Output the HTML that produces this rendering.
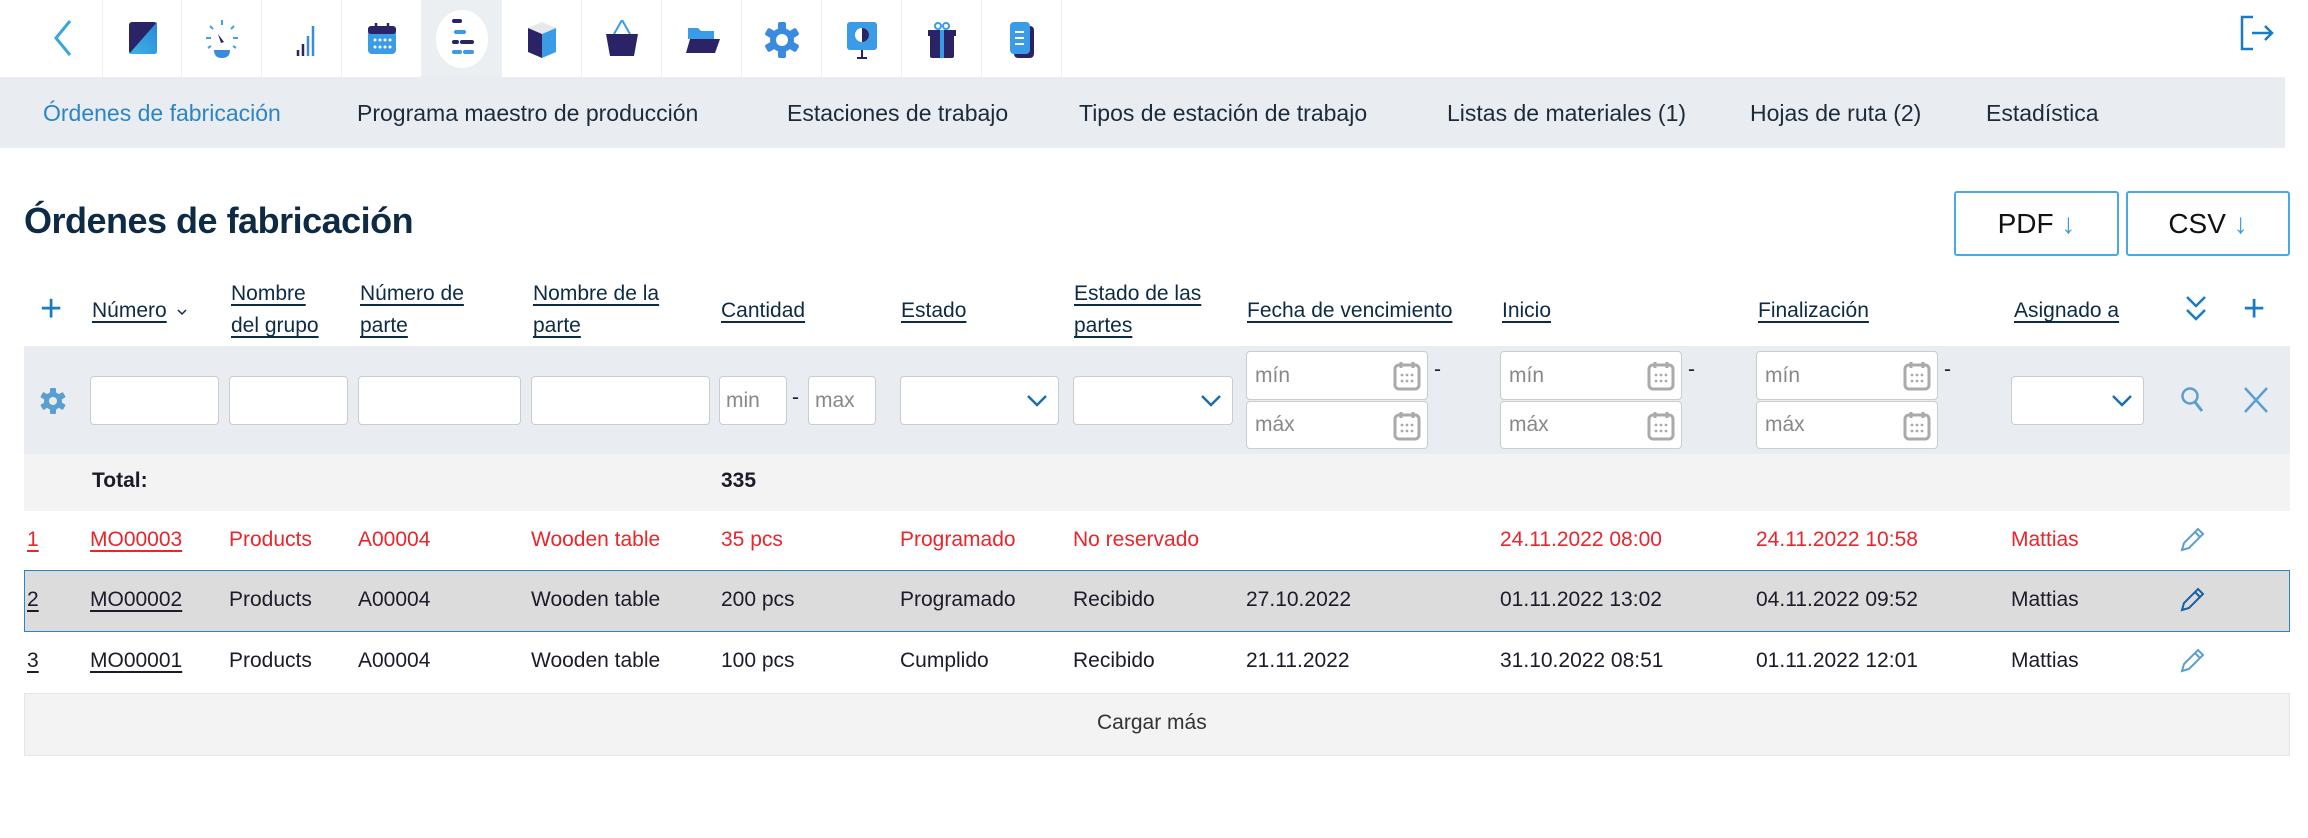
<!DOCTYPE html>
<html><head><meta charset="utf-8"><style>
*{box-sizing:border-box;margin:0;padding:0}
body{width:2308px;height:838px;background:#fff;position:relative;overflow:hidden;font-family:"Liberation Sans",sans-serif;color:#1b1b2a}
.a{position:absolute;white-space:nowrap}
.cell{position:absolute;top:0;width:80px;height:77px;border-right:1px solid #eef0f2}
.cell svg{position:absolute;left:22px;top:20px}
.sub{top:100px;font-size:23px;color:#1c2a3a}
.h{font-size:21px;color:#0d2b45;text-decoration:underline;text-underline-offset:4px;line-height:32px}
.in{position:absolute;background:#fff;border:1px solid #c9ccd0;border-radius:4px}
.ph{font-size:21px;color:#888;position:absolute;left:8px;top:50%;transform:translateY(-50%)}
.r{font-size:21px}
.red{color:#e8262b}
.u{text-decoration:underline;text-underline-offset:4px}
</style></head><body>
<svg class="a" style="left:50px;top:18px" width="24" height="40" viewBox="0 0 24 40"><path d="M20 3 L6 20 L20 37" fill="none" stroke="#3aa6e0" stroke-width="3"/></svg>
<div class="cell" style="left:102px;border-left:1px solid #eef0f2"><svg width="36" height="36" viewBox="0 0 36 36"><defs><linearGradient id="g" x1="0" y1="1" x2="1" y2="0"><stop offset="0" stop-color="#3ab5e6"/><stop offset="1" stop-color="#2e86d9"/></linearGradient></defs><rect x="4" y="2" width="28" height="32" rx="3" fill="#2a2466"/><path d="M32 2 L32 31 Q32 34 29 34 L4 34 Z" fill="url(#g)"/></svg></div>
<div class="cell" style="left:182px"><svg width="36" height="40" viewBox="0 0 36 40"><g stroke="#3aa6e0" stroke-width="2"><path d="M18 0v5M6 6l3 3M30 6l-3 3M2 18h5M29 18h5M4 28l3-2M32 28l-3-2"/></g><path d="M10 30h16q0 8-8 8t-8-8z" fill="#3a8be0"/><path d="M14 14l6 8-3 1z" fill="#2a2466"/></svg></div>
<div class="cell" style="left:262px"><svg width="36" height="40" viewBox="0 0 36 40"><g stroke-width="2.5"><path d="M14 36v-6" stroke="#2a2466"/><path d="M19 36v-12" stroke="#2a2466"/><path d="M24 36v-20" stroke="#3a8be0"/><path d="M29 36v-30" stroke="#3a8be0"/></g></svg></div>
<div class="cell" style="left:342px"><svg width="36" height="40" viewBox="0 0 36 40"><rect x="4" y="6" width="28" height="28" rx="4" fill="#3a9be6"/><rect x="4" y="6" width="28" height="8" rx="3" fill="#2a2466"/><path d="M12 3v7M24 3v7" stroke="#2a2466" stroke-width="2.5"/><g fill="#fff"><circle cx="11" cy="20" r="1.5"/><circle cx="16" cy="20" r="1.5"/><circle cx="21" cy="20" r="1.5"/><circle cx="26" cy="20" r="1.5"/><circle cx="11" cy="27" r="1.5"/><circle cx="16" cy="27" r="1.5"/><circle cx="21" cy="27" r="1.5"/><circle cx="26" cy="27" r="1.5"/></g></svg></div>
<div class="cell" style="left:422px;background:#eceff2"><div style="position:absolute;left:14px;top:10px;width:52px;height:58px;border-radius:50%;background:#fff"></div><svg width="36" height="40" viewBox="0 0 36 40" style="top:18px"><g stroke-width="4" stroke-linecap="round"><path d="M10 3h6" stroke="#2a2466"/><path d="M12 14h8" stroke="#3a9be6"/><path d="M10 24h3M18 24h10" stroke="#2a2466"/><path d="M10 34h6M21 34h7" stroke="#3a9be6"/></g></svg></div>
<div class="cell" style="left:502px"><svg width="36" height="40" viewBox="0 0 36 40"><path d="M4 8L18 2L32 8L18 14Z" fill="#e6e8ec"/><path d="M4 8L18 14V38L4 32Z" fill="#2a2466"/><path d="M32 8L18 14V38L32 32Z" fill="#3a9be6"/></svg></div>
<div class="cell" style="left:582px"><svg width="36" height="40" viewBox="0 0 36 40"><path d="M10 14L18 0L26 14" fill="none" stroke="#3a9be6" stroke-width="2"/><path d="M2 14h32l-4 22h-24z" fill="#2a2466"/></svg></div>
<div class="cell" style="left:662px"><svg width="36" height="40" viewBox="0 0 36 40"><path d="M4 8h10l3 3h13v8H4z" fill="#3a9be6"/><path d="M6 19h30l-5 14H2z" fill="#2a2466"/></svg></div>
<div class="cell" style="left:742px"><svg width="36" height="40" viewBox="0 0 36 40"><g fill="#3a8be0"><circle cx="18" cy="20" r="12"/><rect x="14" y="2" width="8" height="36" rx="2"/><rect x="14" y="2" width="8" height="36" rx="2" transform="rotate(60 18 20)"/><rect x="14" y="2" width="8" height="36" rx="2" transform="rotate(-60 18 20)"/></g><circle cx="18" cy="20" r="6" fill="#fff"/></svg></div>
<div class="cell" style="left:822px"><svg width="36" height="40" viewBox="0 0 36 40"><rect x="3" y="2" width="30" height="28" rx="3" fill="#3a9be6"/><circle cx="18" cy="15" r="7" fill="#fff"/><path d="M18 8a7 7 0 0 1 0 14z" fill="#2a2466"/><path d="M18 30v8M13 38h10" stroke="#2a2466" stroke-width="2"/></svg></div>
<div class="cell" style="left:902px"><svg width="36" height="40" viewBox="0 0 36 40"><rect x="6" y="12" width="24" height="26" rx="2" fill="#2a2466"/><rect x="4" y="10" width="28" height="6" fill="#2a2466"/><rect x="16" y="10" width="4" height="28" fill="#3a9be6"/><circle cx="14" cy="6" r="3" fill="none" stroke="#3a9be6" stroke-width="2"/><circle cx="22" cy="6" r="3" fill="none" stroke="#3a9be6" stroke-width="2"/></svg></div>
<div class="cell" style="left:982px"><svg width="36" height="40" viewBox="0 0 36 40"><rect x="10" y="6" width="20" height="32" rx="4" fill="#2a2466"/><rect x="6" y="2" width="20" height="32" rx="4" fill="#3a9be6"/><path d="M11 12h9M11 18h9M11 24h9" stroke="#fff" stroke-width="2"/></svg></div>
<svg class="a" style="left:2240px;top:15px" width="36" height="36" viewBox="0 0 36 36"><path d="M13 2H2V34H13" fill="none" stroke="#1a7bc4" stroke-width="2.5"/><path d="M12 18H32M25 11L32 18L25 25" fill="none" stroke="#1a7bc4" stroke-width="2.5"/></svg>

<div class="a" style="left:0;top:77px;width:2285px;height:71px;background:#e9edf1"></div>
<div class="a sub" style="left:43px;color:#2a85c7">Órdenes de fabricación</div>
<div class="a sub" style="left:357px">Programa maestro de producción</div>
<div class="a sub" style="left:787px">Estaciones de trabajo</div>
<div class="a sub" style="left:1079px">Tipos de estación de trabajo</div>
<div class="a sub" style="left:1447px">Listas de materiales (1)</div>
<div class="a sub" style="left:1750px">Hojas de ruta (2)</div>
<div class="a sub" style="left:1986px">Estadística</div>

<div class="a" style="left:24px;top:200px;font-size:36px;font-weight:bold;color:#0d2b45;letter-spacing:-0.5px">Órdenes de fabricación</div>
<div class="a" style="left:1954px;top:191px;width:165px;height:65px;border:2px solid #4aa8e6;border-radius:3px;font-size:28px;color:#111;text-align:center;line-height:61px">PDF <span style="color:#3a9be6">↓</span></div>
<div class="a" style="left:2126px;top:191px;width:164px;height:65px;border:2px solid #4aa8e6;border-radius:3px;font-size:28px;color:#111;text-align:center;line-height:61px">CSV <span style="color:#3a9be6">↓</span></div>

<div class="a" style="left:40px;top:290px;font-size:38px;color:#1a7bc4;line-height:38px">+</div>
<div class="a h" style="left:92px;top:295px">Número</div><svg class="a" style="left:176px;top:308px" width="12" height="8" viewBox="0 0 12 8"><path d="M2 2L6 6L10 2" fill="none" stroke="#0d2b45" stroke-width="1.5"/></svg>
<div class="a h" style="left:231px;top:278px">Nombre<br>del grupo</div>
<div class="a h" style="left:360px;top:278px">Número de<br>parte</div>
<div class="a h" style="left:533px;top:278px">Nombre de la<br>parte</div>
<div class="a h" style="left:721px;top:295px">Cantidad</div>
<div class="a h" style="left:901px;top:295px">Estado</div>
<div class="a h" style="left:1074px;top:278px">Estado de las<br>partes</div>
<div class="a h" style="left:1247px;top:295px">Fecha de vencimiento</div>
<div class="a h" style="left:1502px;top:295px">Inicio</div>
<div class="a h" style="left:1758px;top:295px">Finalización</div>
<div class="a h" style="left:2014px;top:295px">Asignado a</div>
<svg class="a" style="left:2184px;top:294px" width="24" height="30" viewBox="0 0 24 30"><path d="M3 3L12 12L21 3M3 16L12 25L21 16" fill="none" stroke="#1a7bc4" stroke-width="2.5"/></svg>
<div class="a" style="left:2243px;top:290px;font-size:38px;color:#1a7bc4;line-height:38px">+</div>

<div class="a" style="left:24px;top:346px;width:2266px;height:108px;background:#e9edf1"></div>
<svg class="a" style="left:40px;top:388px" width="26" height="26" viewBox="0 0 26 26"><g fill="#5b9fd0"><circle cx="13" cy="13" r="9"/><rect x="10" y="0" width="6" height="26" rx="1"/><rect x="10" y="0" width="6" height="26" rx="1" transform="rotate(60 13 13)"/><rect x="10" y="0" width="6" height="26" rx="1" transform="rotate(-60 13 13)"/></g><circle cx="13" cy="13" r="4" fill="#e9edf1"/></svg>
<div class="in" style="left:90px;top:376px;width:129px;height:49px"></div>
<div class="in" style="left:229px;top:376px;width:119px;height:49px"></div>
<div class="in" style="left:358px;top:376px;width:163px;height:49px"></div>
<div class="in" style="left:531px;top:376px;width:179px;height:49px"></div>
<div class="in" style="left:719px;top:376px;width:68px;height:49px"><span class="ph" style="left:6px">min</span></div>
<div class="a" style="left:792px;top:386px;font-size:21px">-</div>
<div class="in" style="left:808px;top:376px;width:68px;height:49px"><span class="ph" style="left:6px">max</span></div>
<div class="in" style="left:900px;top:376px;width:159px;height:49px"><svg style="position:absolute;right:10px;top:16px" width="22" height="16" viewBox="0 0 22 16"><path d="M2 3L11 12L20 3" fill="none" stroke="#1a6fb0" stroke-width="2.5"/></svg></div>
<div class="in" style="left:1073px;top:376px;width:160px;height:49px"><svg style="position:absolute;right:10px;top:16px" width="22" height="16" viewBox="0 0 22 16"><path d="M2 3L11 12L20 3" fill="none" stroke="#1a6fb0" stroke-width="2.5"/></svg></div>
<div id="dates"></div>
<div class="in" style="left:2011px;top:376px;width:133px;height:49px"><svg style="position:absolute;right:10px;top:16px" width="22" height="16" viewBox="0 0 22 16"><path d="M2 3L11 12L20 3" fill="none" stroke="#1a6fb0" stroke-width="2.5"/></svg></div>
<svg class="a" style="left:2180px;top:386px" width="26" height="28" viewBox="0 0 26 28"><circle cx="10" cy="10" r="7.5" fill="none" stroke="#5b9fd0" stroke-width="2.5"/><path d="M15 16L22 25" stroke="#5b9fd0" stroke-width="3"/></svg>
<svg class="a" style="left:2242px;top:385px" width="28" height="30" viewBox="0 0 28 30"><path d="M3 3L25 27M25 3L3 27" stroke="#5b9fd0" stroke-width="2.5"/></svg>

<div class="a" style="left:24px;top:454px;width:2266px;height:57px;background:#f3f3f3"></div>
<div class="a r" style="left:92px;top:469px;font-weight:bold">Total:</div>
<div class="a r" style="left:721px;top:469px;font-weight:bold">335</div>

<div class="a" style="left:24px;top:570px;width:2266px;height:62px;background:#dcdcdc;border:1.5px solid #2a85c7"></div>
<div class="a" style="left:24px;top:693px;width:2266px;height:63px;background:#f3f3f3;border:1px solid #e6e6e6"></div>
<div class="a r" style="left:1097px;top:711px;color:#333">Cargar más</div>
<div id="rows"></div>
<script>
var cal='<svg style="position:absolute;right:6px;top:9px" width="28" height="30" viewBox="0 0 28 30"><rect x="2" y="4" width="24" height="24" rx="4" fill="none" stroke="#aaa" stroke-width="3"/><path d="M8 1v6M20 1v6" stroke="#aaa" stroke-width="3"/><g fill="#aaa"><circle cx="9" cy="14" r="1.4"/><circle cx="14" cy="14" r="1.4"/><circle cx="19" cy="14" r="1.4"/><circle cx="9" cy="20" r="1.4"/><circle cx="14" cy="20" r="1.4"/><circle cx="19" cy="20" r="1.4"/></g></svg>';
var h='';[1246,1500,1756].forEach(function(x){
h+='<div class="in" style="left:'+x+'px;top:351px;width:182px;height:49px"><span class="ph">mín</span>'+cal+'</div>';
h+='<div class="in" style="left:'+x+'px;top:401px;width:182px;height:48px"><span class="ph">máx</span>'+cal+'</div>';
h+='<div class="a" style="left:'+(x+188)+'px;top:358px;font-size:21px">-</div>';});
document.getElementById('dates').outerHTML=h;
var cols=[27,90,229,358,531,721,900,1073,1246,1500,1756,2011];
var rows=[[528,'red',['1','MO00003','Products','A00004','Wooden table','35 pcs','Programado','No reservado','','24.11.2022 08:00','24.11.2022 10:58','Mattias']],
[588,'',['2','MO00002','Products','A00004','Wooden table','200 pcs','Programado','Recibido','27.10.2022','01.11.2022 13:02','04.11.2022 09:52','Mattias']],
[649,'',['3','MO00001','Products','A00004','Wooden table','100 pcs','Cumplido','Recibido','21.11.2022','31.10.2022 08:51','01.11.2022 12:01','Mattias']]];
var o='';rows.forEach(function(r,ri){r[2].forEach(function(t,i){o+='<div class="a r '+r[1]+(i<2?' u':'')+'" style="left:'+cols[i]+'px;top:'+r[0]+'px">'+t+'</div>';});
var pc=ri==1?'#1a5fa0':'#5b9fd0';
o+='<svg class="a" style="left:2178px;top:'+(r[0]-2)+'px" width="28" height="28" viewBox="0 0 28 28"><path d="M4 24L6 17L20 3L25 8L11 22Z M17 6L22 11" fill="none" stroke="'+pc+'" stroke-width="2"/></svg>';});
document.getElementById('rows').outerHTML=o;
</script>
</body></html>
